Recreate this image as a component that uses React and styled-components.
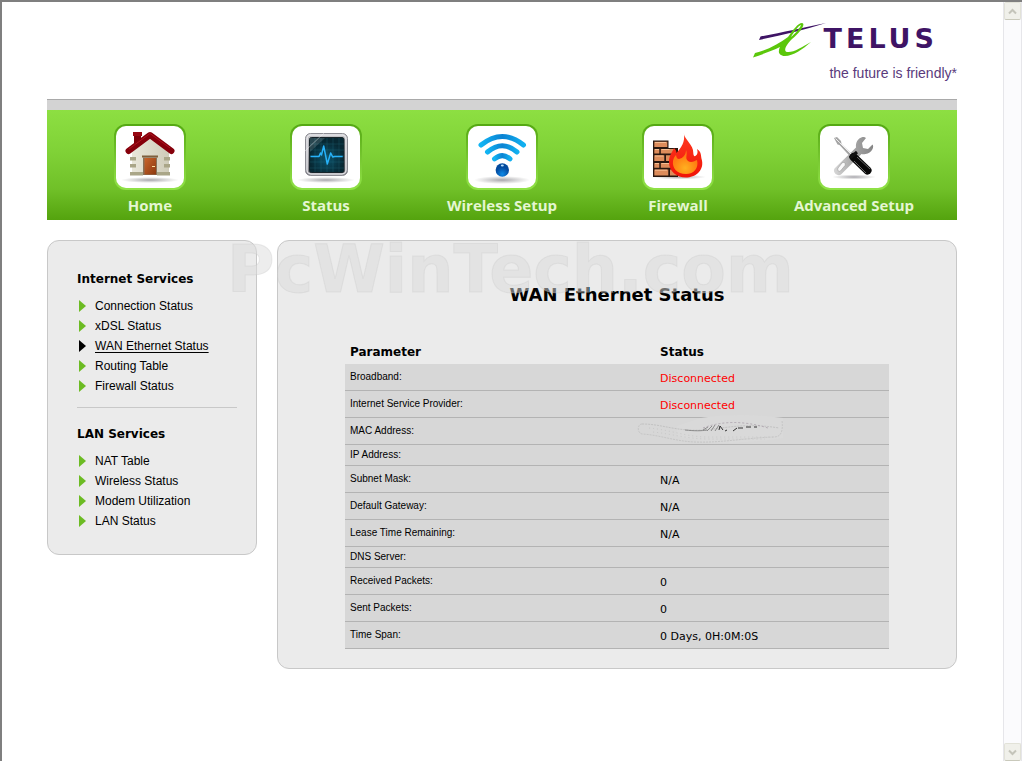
import React from "react";
import styled, { createGlobalStyle, css } from "styled-components";

const GlobalStyle = createGlobalStyle`
  * { box-sizing: border-box; }
  body { margin: 0; background: #fff; color: #000; font-family: "DejaVu Sans", Verdana, sans-serif; }
  ul, h1, h2 { margin: 0; padding: 0; }
  ul { list-style: none; }
  a { color: inherit; text-decoration: none; }
`;

const Frame = styled.div`
  display: flex;
  min-height: 100vh;
  border-top: 2px solid #7f7f7f;
  border-left: 2px solid #7f7f7f;
`;

const Page = styled.div`
  flex: 1;
  min-width: 0;
  padding: 0 21px 40px 20px;
`;

const Content = styled.div`
  position: relative;
  max-width: 910px;
  margin: 0 auto;
`;

const Header = styled.header`
  display: flex;
  flex-direction: column;
  align-items: flex-end;
  height: 97px;
  padding-top: 18px;
  color: #3f1465;
`;

const Brand = styled.div`
  display: flex;
  padding-right: 19px;
  svg { display: block; overflow: visible; }
`;

const Wordmark = styled.span`
  font-size: 27px;
  font-weight: 700;
  line-height: 38px;
  letter-spacing: 4px;
`;

const Tagline = styled.span`
  font-family: "Liberation Sans", Arial, sans-serif;
  font-size: 14px;
  line-height: 20px;
  margin-top: 3px;
  color: #5a3a7c;
`;

const TopStrip = styled.div`
  height: 11px;
  background: #d3d3d3;
  border-top: 1px solid #a9a9a9;
`;

const Nav = styled.nav`
  display: grid;
  grid-template-columns: repeat(5, 1fr);
  height: 110px;
  padding: 14px 15px 0;
  background: linear-gradient(#8ddf42, #7fd136 40%, #70c028 72%, #54a30e);
`;

const NavLink = styled.a`
  display: flex;
  flex-direction: column;
  align-items: center;
  gap: 5px;
  color: #e4f6d2;
  font-family: "Open Sans", "Noto Sans", sans-serif;
  font-size: 15px;
  font-weight: 700;
  line-height: 20px;
`;

const Tile = styled.span`
  width: 72px;
  height: 66px;
  padding: 2px;
  border-radius: 12px;
  background: linear-gradient(#54a812, #7ccc35 60%, #90e246);
  svg { display: block; background: #fff; border-radius: 10px; }
`;

const Columns = styled.div`
  display: flex;
  align-items: flex-start;
  gap: 20px;
  margin-top: 20px;
`;

const panel = css`
  background: #ebebeb;
  border: 1px solid #c8c8c8;
  border-radius: 12px;
`;

const Sidebar = styled.aside`
  ${panel}
  width: 210px;
  padding: 28px 19px 23px 29px;
`;

const MenuGroup = styled.section`
  & + & {
    margin-top: 11px;
    padding-top: 16px;
    border-top: 1px solid #c8c8c8;
  }
`;

const MenuTitle = styled.h2`
  font-size: 12px;
  line-height: 20px;
  margin-bottom: 7px;
`;

const MenuItem = styled.li`
  display: flex;
  align-items: center;
  height: 20px;
  padding-left: 2px;
  font-family: "Liberation Sans", Arial, sans-serif;
  font-size: 12px;

  &::before {
    content: "";
    margin-right: 9px;
    border: solid transparent;
    border-width: 6px 0 6px 7px;
    border-left-color: ${(p) => (p.$current ? "#000" : "#6cbb23")};
  }
  a { text-decoration: ${(p) => (p.$current ? "underline" : "none")}; text-underline-offset: 2px; }
`;

const Main = styled.main`
  ${panel}
  flex: 1;
  padding: 41px 67px 19px;
`;

const Title = styled.h1`
  font-size: 18px;
  line-height: 26px;
  text-align: center;
  margin-bottom: 32px;
`;

const StatusTable = styled.table`
  width: 100%;
  table-layout: fixed;
  border-collapse: separate;
  border-spacing: 0;
  text-align: left;
`;

const HeadCell = styled.th`
  width: ${(p) => p.$width};
  height: 24px;
  padding: 0 5px 1px;
  font-size: 12px;
`;

const ParamCell = styled.th`
  height: ${(p) => (p.$short ? 21 : 27)}px;
  padding: 0 5px 2px;
  background: #d7d7d7;
  border-bottom: 1px solid #b3b3b3;
  font-family: "Liberation Sans", Arial, sans-serif;
  font-size: 10px;
  font-weight: 400;
`;

const ValueCell = styled.td`
  position: relative;
  padding: 4px 5px 0;
  background: #d7d7d7;
  border-bottom: 1px solid #b3b3b3;
  font-size: 11px;
  line-height: 16px;
  color: ${(p) => (p.$alert ? "#f00" : "#000")};
`;

const Scribble = styled.svg`
  position: absolute;
  left: -18px;
  top: -4px;
`;

const Watermark = styled.div`
  position: absolute;
  left: 180px;
  top: 230px;
  font-size: 65px;
  line-height: 76px;
  font-weight: 700;
  white-space: nowrap;
  color: rgba(220, 220, 220, 0.5);
  -webkit-text-stroke: 1px rgba(200, 200, 200, 0.3);
  pointer-events: none;
`;

const ScrollBar = styled.div`
  display: flex;
  flex-direction: column;
  justify-content: space-between;
  width: 19px;
  background: #fbfbfd;
  border-left: 1px solid #e6e6ea;
  border-right: 1px solid #e6e6ea;
`;

const ScrollButton = styled.button`
  display: grid;
  place-items: center;
  width: 17px;
  height: 18px;
  padding: 0;
  border: 1px solid #e2e2d8;
  border-bottom-color: #c9c9bb;
  border-radius: 2px;
  background: #f0f0ea;
`;

const HomeIcon = () => (
  <svg width="68" height="62" viewBox="0 0 68 62" aria-hidden="true">
    <defs>
      <linearGradient id="wall" x1="0" x2="1"><stop stopColor="#e9e7da" /><stop offset="1" stopColor="#cfccb9" /></linearGradient>
      <linearGradient id="door" x1="0" x2="1" y2="1"><stop stopColor="#c9652c" /><stop offset="1" stopColor="#8c3a10" /></linearGradient>
      <radialGradient id="shade"><stop stopColor="#77757f" stopOpacity=".65" /><stop offset="1" stopColor="#888" stopOpacity="0" /></radialGradient>
    </defs>
    <ellipse cx="34" cy="54" rx="29" ry="3" fill="url(#shade)" />
    <path d="M18 7h7v12h-7z" fill="#7d0008" />
    <path d="M17 6h9v4h-9z" fill="#970812" />
    <path d="M34 11 53 25v24H16V25z" fill="url(#wall)" />
    <path d="M14 31h6v3.500h-6zM14 38h6v3.500h-6zM14 46h13v3.500H14zM48 31h6v3.500h-6zM48 38h6v3.500h-6zM41 46h13v3.500H41z" fill="#aaa688" />
    <path d="M26 29.500h16v2H26z" fill="#7e603e" />
    <path d="M27 31.500h14V49H27z" fill="#87725a" />
    <path d="M28.500 32H40v16.500H28.500z" fill="url(#door)" />
    <path d="M36 40.500h3" stroke="#ffe0a0" />
    <path d="M12.500 25 34 9l21.500 16" fill="none" stroke="#86000b" strokeWidth="6" strokeLinecap="round" strokeLinejoin="round" />
    <path d="m13 23 21-15.500L54 22" fill="none" stroke="#ad1520" strokeWidth="1" />
  </svg>
);

const StatusIcon = () => (
  <svg width="68" height="62" viewBox="0 0 68 62" aria-hidden="true">
    <defs>
      <linearGradient id="rim" x2="0" y2="1"><stop stopColor="#c9c9cc" /><stop offset="1" stopColor="#77777d" /></linearGradient>
      <radialGradient id="screen" cy=".6"><stop stopColor="#0c526a" /><stop offset="1" stopColor="#072833" /></radialGradient>
    </defs>
    <ellipse cx="34" cy="54" rx="29" ry="3" fill="url(#shade)" />
    <rect x="13.500" y="7.500" width="42" height="42" rx="5" fill="url(#rim)" stroke="#8c8c93" />
    <rect x="15" y="9" width="39" height="39" rx="4" fill="none" stroke="#e4e4e8" strokeWidth="1.500" />
    <rect x="17.500" y="11.500" width="34.500" height="35" rx="2" fill="url(#screen)" stroke="#17242a" />
    <path d="M23 12v34M29 12v34M35 12v34M41 12v34M47 12v34M18 18h34M18 24h34M18 30h34M18 36h34M18 42h34" stroke="#2a7d93" strokeWidth=".5" opacity=".5" />
    <path d="M18 12h15L18 26z" fill="#fff" opacity=".15" />
    <path d="m13 25 19-18" stroke="#fff" opacity=".4" />
    <path d="M18.500 30.500H27l1.500-3.500 1 2 2.200-9 3.600 18 3.400-11 2 4 2-.5h8" fill="none" stroke="#27b2fa" strokeWidth="1.500" strokeLinejoin="round" />
  </svg>
);

const WirelessIcon = () => (
  <svg width="68" height="62" viewBox="0 0 68 62" aria-hidden="true">
    <defs>
      <linearGradient id="wave" x1="0" x2="1"><stop stopColor="#12b4f3" /><stop offset=".5" stopColor="#0a82d2" /><stop offset="1" stopColor="#12b0f0" /></linearGradient>
      <radialGradient id="ball" cy=".8"><stop stopColor="#0c8ae8" /><stop offset="1" stopColor="#034a9e" /></radialGradient>
    </defs>
    <ellipse cx="34" cy="54" rx="28" ry="4" fill="url(#shade)" />
    <g fill="none" stroke="url(#wave)" strokeWidth="5" strokeLinecap="round">
      <path d="M13 19q21.300-17 42.500 0" />
      <path d="M19.500 26q14.800-12.500 29.500 0" />
      <path d="M26.500 32.800q7.800-6.500 15.500 0" />
    </g>
    <circle cx="34.300" cy="44" r="6.700" fill="url(#ball)" />
    <ellipse cx="34.300" cy="39.500" rx="1.500" ry="1" fill="#b8e0ff" />
  </svg>
);

const FirewallIcon = () => (
  <svg width="68" height="62" viewBox="0 0 68 62" aria-hidden="true">
    <defs>
      <linearGradient id="flame" x2="0" y2="1"><stop stopColor="#ff3a20" /><stop offset="1" stopColor="#f01408" /></linearGradient>
      <radialGradient id="ember" cy=".75"><stop stopColor="#ffb020" /><stop offset="1" stopColor="#ff7d12" /></radialGradient>
    </defs>
    <ellipse cx="35" cy="51" rx="27" ry="2.500" fill="url(#shade)" />
    <path d="M9 14.500h15.500V22H34v29H9z" fill="#29170f" />
    <path d="M10.300 15.800h13v5.200h-13zM10.300 23h5v4.500h-5zM16.800 23h14v4.500h-14zM10.300 29.200h10V35h-10zM22 29.200h10V35H22zM10.300 37h5v4.700h-5zM16.800 37h13v4.700h-13zM10.300 43.500h14v6h-14zM26 43.500h7v6h-7z" fill="#dd8c5b" />
    <path d="M11 16.500h11M11 23.500h4M17.500 23.500h8M11 30h8.500M11 37.500h4M17.500 37.500h8M11 44.200h12" stroke="#f7be92" />
    <path d="M39.800 7c0 6 10 12 9.500 20 0 2.500 1 3.500 2 3 2.500-1.500 2.700-4 1.700-7 5 3 3.500 7 5 11.500C60 45 51 51.500 42 51.500c-9.500 0-17-6-17-15.500 0-7 3-9 5-14 1.500 1.500 2.500 3 2.500 5C37 22 41.500 16 39.800 7z" fill="url(#flame)" />
    <path d="M42 24c2 5-1.500 8 2 11 3 2.500 7 0 9-1 2 8-3 14-11 14-9 0-14-6-13-13 .5-3 2-5 3-6 .5 3 1.500 4 3 4 4-1 7-4 7-9z" fill="url(#ember)" />
  </svg>
);

const ToolsIcon = () => (
  <svg width="68" height="62" viewBox="0 0 68 62" aria-hidden="true">
    <defs>
      <linearGradient id="steel" x1="0" x2="1"><stop stopColor="#d7d7d7" /><stop offset=".5" stopColor="#a6a6a6" /><stop offset="1" stopColor="#858585" /></linearGradient>
    </defs>
    <ellipse cx="34" cy="51" rx="22" ry="2.500" fill="url(#shade)" />
    <path d="M14.500 42.500 36 21.500c-.5-5 1.500-9 6.500-10.500 2 0 3 .5 3.500 1l-4 5 1 5 5 1 4.500-4.500c2 2-.5 9-7 9.500-2 .3-3 .2-4 0L21 48.500c-3 2.500-9-2-6.500-6z" fill="url(#steel)" />
    <path d="m20.500 45 4.500-5.500c1-2.500-1-4-3-2.500l-4 5c-1 2.500 1 4 2.500 3z" fill="#fafafa" stroke="#999" strokeWidth=".6" />
    <path d="m14 12 3-1 4 4 .5 3L34 30l-2.500 2L19.500 19l-2-.5z" fill="#a5a5a5" />
    <path d="m15.500 12.500 4 4L33 30" fill="none" stroke="#eee" strokeWidth="1" />
    <path d="m33.500 31 14 13.500" stroke="#080808" strokeWidth="8" strokeLinecap="round" />
    <path d="m30 32 7-6" stroke="#111" strokeWidth="3" />
    <path d="m37 31 13 12M34 35l12 12" stroke="#666" strokeWidth="1" />
  </svg>
);

const NAV_ITEMS = [
  ["Home", HomeIcon],
  ["Status", StatusIcon],
  ["Wireless Setup", WirelessIcon],
  ["Firewall", FirewallIcon],
  ["Advanced Setup", ToolsIcon],
];

const MENU = [
  { title: "Internet Services", items: ["Connection Status", "xDSL Status", "WAN Ethernet Status", "Routing Table", "Firewall Status"] },
  { title: "LAN Services", items: ["NAT Table", "Wireless Status", "Modem Utilization", "LAN Status"] },
];

const ROWS = [
  { label: "Broadband:", value: "Disconnected", alert: true },
  { label: "Internet Service Provider:", value: "Disconnected", alert: true },
  { label: "MAC Address:", hidden: true },
  { label: "IP Address:", short: true },
  { label: "Subnet Mask:", value: "N/A" },
  { label: "Default Gateway:", value: "N/A" },
  { label: "Lease Time Remaining:", value: "N/A" },
  { label: "DNS Server:", short: true },
  { label: "Received Packets:", value: "0" },
  { label: "Sent Packets:", value: "0" },
  { label: "Time Span:", value: "0 Days, 0H:0M:0S" },
];

const ErasedAddress = () => (
  <Scribble width="152" height="30" viewBox="0 0 152 30" aria-hidden="true">
    <path d="M64 4Q100-2 146 4v20Q90 32 62 27L40 22V12z" fill="#d9d9d9" />
    <path d="M5 10c-5 0-5 9 0 10 18 1 32 7 52 8 28 1 50-4 80-5 8 0 9-7 8-17" fill="none" stroke="#c6c6c6" strokeDasharray="2 1" />
    <path d="M5 10c17 0 28 5 47 6 26 2 48-9 90-2" fill="none" stroke="#c2c2c2" strokeDasharray="2 1" />
    <path d="M12 14c22 2 34 8 56 9h70M16 18c20 2 34 7 56 7h56" fill="none" stroke="#c8c8c8" strokeDasharray="1 3" />
    <path d="M48 16c10 1 16 1 22 0M66 16l5-3M70 17l5-5M74 17l4-6M78 17l4-6" fill="none" stroke="#8a8a8a" />
    <path d="m82 16 1-4 3 4M88 17l2-1M96 17l4-3M101 14h5M109 13h5M117 13h3" fill="none" stroke="#333" />
    <path d="M66 14Q95 3 131 14" fill="none" stroke="#b2a9b2" strokeDasharray="2 2" />
  </Scribble>
);

const Arrow = ({ d }) => (
  <svg width="9" height="7" viewBox="0 0 9 7" aria-hidden="true">
    <path d={d} fill="none" stroke="#c4c4ba" strokeWidth="2" />
  </svg>
);

export default function App() {
  return (
    <Frame>
      <GlobalStyle />
      <Page>
        <Content>
          <Header>
            <Brand>
              <svg width="72" height="40" viewBox="0 0 72 40" aria-hidden="true">
                <path d="M7 20 8.500 16.500C30 12.500 50 8 74 3 52 10 30 15 7 20z" fill="#3f1465" />
                <path d="M1 37.500 3 33c12-3 24-9 33-16C41 10 46 3 50 3c4 .5-1 9-10 16-6 6-9 12-5 13 6 1 15-5 24-10-8 7-18 14-26 14-7-.5-7-5-5-9C20 31 11 34 1 37.500zM39 17c5-4 9-9 10-12-3 1-7 7-10 12z" fill="#5bc70b" />
              </svg>
              <Wordmark>TELUS</Wordmark>
            </Brand>
            <Tagline>the future is friendly*</Tagline>
          </Header>
          <TopStrip />
          <Nav>
            {NAV_ITEMS.map(([label, Icon]) => (
              <NavLink href="#" key={label}>
                <Tile><Icon /></Tile>
                {label}
              </NavLink>
            ))}
          </Nav>
          <Columns>
            <Sidebar>
              {MENU.map((group) => (
                <MenuGroup key={group.title}>
                  <MenuTitle>{group.title}</MenuTitle>
                  <ul>
                    {group.items.map((item) => (
                      <MenuItem key={item} $current={item === "WAN Ethernet Status"}>
                        <a href="#">{item}</a>
                      </MenuItem>
                    ))}
                  </ul>
                </MenuGroup>
              ))}
            </Sidebar>
            <Main>
              <Title>WAN Ethernet Status</Title>
              <StatusTable>
                <thead>
                  <tr>
                    <HeadCell $width="57%">Parameter</HeadCell>
                    <HeadCell $width="43%">Status</HeadCell>
                  </tr>
                </thead>
                <tbody>
                  {ROWS.map((row) => (
                    <tr key={row.label}>
                      <ParamCell scope="row" $short={row.short}>{row.label}</ParamCell>
                      <ValueCell $alert={row.alert}>
                        {row.hidden ? <ErasedAddress /> : row.value}
                      </ValueCell>
                    </tr>
                  ))}
                </tbody>
              </StatusTable>
            </Main>
          </Columns>
          <Watermark>PcWinTech.com</Watermark>
        </Content>
      </Page>
      <ScrollBar>
        <ScrollButton type="button" aria-label="Scroll up"><Arrow d="M1 5.500 4.500 2 8 5.500" /></ScrollButton>
        <ScrollButton type="button" aria-label="Scroll down"><Arrow d="M1 1.500 4.500 5 8 1.500" /></ScrollButton>
      </ScrollBar>
    </Frame>
  );
}
